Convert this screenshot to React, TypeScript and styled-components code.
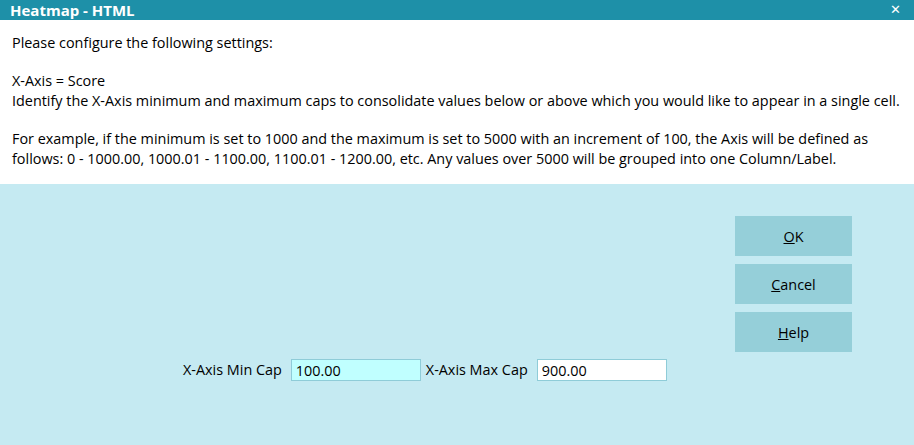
import React from 'react';
import styled, {createGlobalStyle} from "styled-components";

const GlobalStyle = createGlobalStyle`
    html, body {
        margin: 0;
        padding: 0;
        background: #C5EAF2;
    }
    body {
        font-family: "Open Sans", "Noto Sans", "Liberation Sans", sans-serif;
    }
`

const App = () => {
    return (
        <Dialog>
            <GlobalStyle/>
            <TitleBar>
                <TitleText>Heatmap - HTML</TitleText>
                <CloseBtn>✕</CloseBtn>
            </TitleBar>
            <InfoPanel>
                <Line>Please configure the following settings:</Line>
                <Spacer/>
                <Line>X-Axis = Score</Line>
                <Line>Identify the X-Axis minimum and maximum caps to consolidate values below or above which you would like to appear in a single cell.</Line>
                <Spacer/>
                <Line>For example, if the minimum is set to 1000 and the maximum is set to 5000 with an increment of 100, the Axis will be defined as</Line>
                <Line>follows: 0 - 1000.00, 1000.01 - 1100.00, 1100.01 - 1200.00, etc. Any values over 5000 will be grouped into one Column/Label.</Line>
            </InfoPanel>
            <FormPanel>
                <ButtonColumn>
                    <ActionButton><u>O</u>K</ActionButton>
                    <ActionButton><u>C</u>ancel</ActionButton>
                    <ActionButton><u>H</u>elp</ActionButton>
                </ButtonColumn>
                <FieldRow>
                    <FieldLabel>X-Axis Min Cap</FieldLabel>
                    <FieldInput value="100.00" readOnly focused/>
                    <FieldLabel>X-Axis Max Cap</FieldLabel>
                    <FieldInput value="900.00" readOnly/>
                </FieldRow>
            </FormPanel>
        </Dialog>
    );
};

export default App;

const Dialog = styled.div`
    width: 914px;
    height: 445px;
    display: flex;
    flex-direction: column;
    background: #C5EAF2;
    color: #000;
`

const TitleBar = styled.div`
    height: 20px;
    background: #1E90A8;
    display: flex;
    align-items: center;
    justify-content: space-between;
    padding: 0 13px 0 10px;
`

const TitleText = styled.span`
    color: #FFF;
    font-size: 15px;
    font-weight: 700;
    line-height: 20px;
`

const CloseBtn = styled.span`
    color: #FFF;
    font-size: 13px;
    font-weight: 700;
    line-height: 20px;
    font-family: "DejaVu Sans", sans-serif;
`

const InfoPanel = styled.div`
    height: 164px;
    box-sizing: border-box;
    background: #FFF;
    padding: 13px 12px 0 12px;
`

const Line = styled.div`
    font-size: 14.4px;
    line-height: 20px;
    white-space: nowrap;
`

const Spacer = styled.div`
    height: 18px;
`

const FormPanel = styled.div`
    flex: 1;
    display: flex;
    flex-direction: column;
`

const ButtonColumn = styled.div`
    align-self: flex-end;
    margin: 32px 62px 0 0;
    display: flex;
    flex-direction: column;
    gap: 8px;
`

const ActionButton = styled.button`
    width: 117px;
    height: 40px;
    border: none;
    background: #95CFD9;
    color: #000;
    font-family: inherit;
    font-size: 14.4px;
    padding: 0;
`

const FieldRow = styled.div`
    display: flex;
    align-items: center;
    gap: 5px;
    margin-top: 7px;
    padding-left: 183px;
`

const FieldLabel = styled.span`
    font-size: 14.4px;
    line-height: 22px;
    margin-right: 4px;
`

const FieldInput = styled.input<{focused?: boolean}>`
    width: 130px;
    height: 22px;
    box-sizing: border-box;
    border: 1px solid #8FCCD8;
    background: ${p => p.focused ? '#C0FFFF' : '#FFF'};
    font-family: inherit;
    font-size: 14.4px;
    padding: 0 4px;
    outline: none;
    color: #000;
`
